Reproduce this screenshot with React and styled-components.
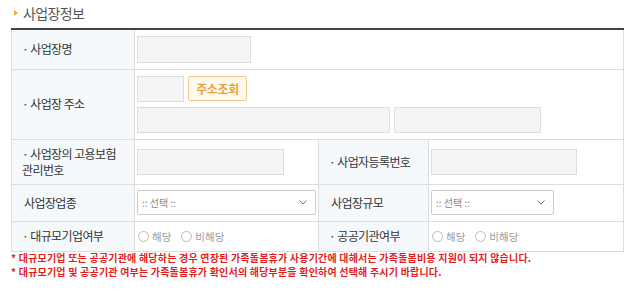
import React from 'react';
import styled, { createGlobalStyle } from 'styled-components';

const Global = createGlobalStyle`
  body {
    margin: 0;
    background: #fff;
    font-family: "Noto Sans CJK KR", "Noto Sans", sans-serif;
  }
`

const Wrap = styled.div`
  width: 640px;
  height: 294px;
  padding: 4px 0 0 11px;
  box-sizing: border-box;
  overflow: hidden;
`

const Title = styled.h3`
  margin: 0 0 6px;
  display: flex;
  align-items: center;
  gap: 5px;
  font-size: 14px;
  font-weight: normal;
  color: #555;
  letter-spacing: -0.6px;
  height: 18px;
`

const Mark = styled.span`
  width: 0;
  height: 0;
  margin-left: 3px;
  border-left: 4px solid #f0a830;
  border-top: 3px solid transparent;
  border-bottom: 3px solid transparent;
`

const Table = styled.table`
  border-collapse: collapse;
  width: 612px;
  table-layout: fixed;
  border-top: 2px solid #444;
`

const Row = styled.tr`
  height: ${p => p.$h}px;
`

const Label = styled.th`
  background: #f6f9fb;
  border: 1px solid #ddd;
  text-align: left;
  font-weight: normal;
  font-size: 12px;
  letter-spacing: -0.6px;
  color: #333;
  padding: 0 8px 0 ${p => (p.$dot ? 10 : 12)}px;
  line-height: 16px;
  vertical-align: middle;
`

const Cell = styled.td`
  border: 1px solid #ddd;
  padding: 0 2px;
  vertical-align: middle;
`

const Input = styled.div`
  width: ${p => p.$w}px;
  height: ${p => p.$h || 27}px;
  box-sizing: border-box;
  background: #f5f5f5;
  border: 1px solid #ddd;
`

const Line = styled.div`
  display: flex;
  gap: 4px;
  align-items: center;
`

const Stack = styled.div`
  display: flex;
  flex-direction: column;
  gap: 5px;
`

const Button = styled.div`
  width: 59px;
  height: 25px;
  box-sizing: border-box;
  border: 1px solid #f2c98a;
  border-radius: 2px;
  background: #fffaf0;
  color: #e9a23a;
  font-size: 12px;
  font-weight: bold;
  letter-spacing: -0.4px;
  display: flex;
  align-items: center;
  justify-content: center;
`

const Select = styled.div`
  width: ${p => p.$w}px;
  height: 25px;
  box-sizing: border-box;
  border: 1px solid #ccc;
  border-radius: 2px;
  background: #fff;
  display: flex;
  align-items: center;
  justify-content: space-between;
  padding: 0 8px 0 4px;
  font-size: 10px;
  color: #888;
`

const Radios = styled.div`
  display: flex;
  align-items: center;
  gap: 10px;
  padding-left: 1px;
`

const Radio = styled.label`
  display: flex;
  align-items: center;
  gap: 3px;
  font-size: 10.5px;
  color: #999;
`

const Circle = styled.span`
  width: 11px;
  height: 11px;
  box-sizing: border-box;
  border: 1px solid #bbb;
  border-radius: 50%;
  background: #fff;
`

const Notes = styled.div`
  margin-top: -1px;
  color: #e41c1c;
  font-size: 10px;
  letter-spacing: 0.2px;
  line-height: 14px;
  font-weight: bold;
`

function Chevron() {
  return (
    <svg width="8" height="5" viewBox="0 0 8 5">
      <path d="M0.5 0.5 L4 4 L7.5 0.5" fill="none" stroke="#777" strokeWidth="1" />
    </svg>
  )
}

function Choice() {
  return (
    <Radios>
      <Radio><Circle />해당</Radio>
      <Radio><Circle />비해당</Radio>
    </Radios>
  )
}

export default function App() {
  return (
    <Wrap>
      <Global />
      <Title><Mark />사업장정보</Title>
      <Table>
        <colgroup>
          <col style={{ width: 123 }} />
          <col style={{ width: 184 }} />
          <col style={{ width: 110 }} />
          <col style={{ width: 195 }} />
        </colgroup>
        <tbody>
          <Row $h={40}>
            <Label $dot>· 사업장명</Label>
            <Cell colSpan={3}><Input $w={114} /></Cell>
          </Row>
          <Row $h={70}>
            <Label $dot>· 사업장 주소</Label>
            <Cell colSpan={3}>
              <Stack>
                <Line>
                  <Input $w={47} $h={26} />
                  <Button>주소조회</Button>
                </Line>
                <Line>
                  <Input $w={253} $h={26} />
                  <Input $w={147} $h={26} />
                </Line>
              </Stack>
            </Cell>
          </Row>
          <Row $h={45}>
            <Label $dot>· 사업장의 고용보험<br />관리번호</Label>
            <Cell><Input $w={147} $h={26} /></Cell>
            <Label $dot>· 사업자등록번호</Label>
            <Cell><Input $w={146} $h={26} /></Cell>
          </Row>
          <Row $h={37}>
            <Label>사업장업종</Label>
            <Cell><Select $w={179}>:: 선택 ::<Chevron /></Select></Cell>
            <Label>사업장규모</Label>
            <Cell><Select $w={123}>:: 선택 ::<Chevron /></Select></Cell>
          </Row>
          <Row $h={30}>
            <Label $dot>· 대규모기업여부</Label>
            <Cell><Choice /></Cell>
            <Label $dot>· 공공기관여부</Label>
            <Cell><Choice /></Cell>
          </Row>
        </tbody>
      </Table>
      <Notes>
        <div>* 대규모기업 또는 공공기관에 해당하는 경우 연장된 가족돌봄휴가 사용기간에 대해서는 가족돌봄비용 지원이 되지 않습니다.</div>
        <div>* 대규모기업 및 공공기관 여부는 가족돌봄휴가 확인서의 해당부분을 확인하여 선택해 주시기 바랍니다.</div>
      </Notes>
    </Wrap>
  )
}
